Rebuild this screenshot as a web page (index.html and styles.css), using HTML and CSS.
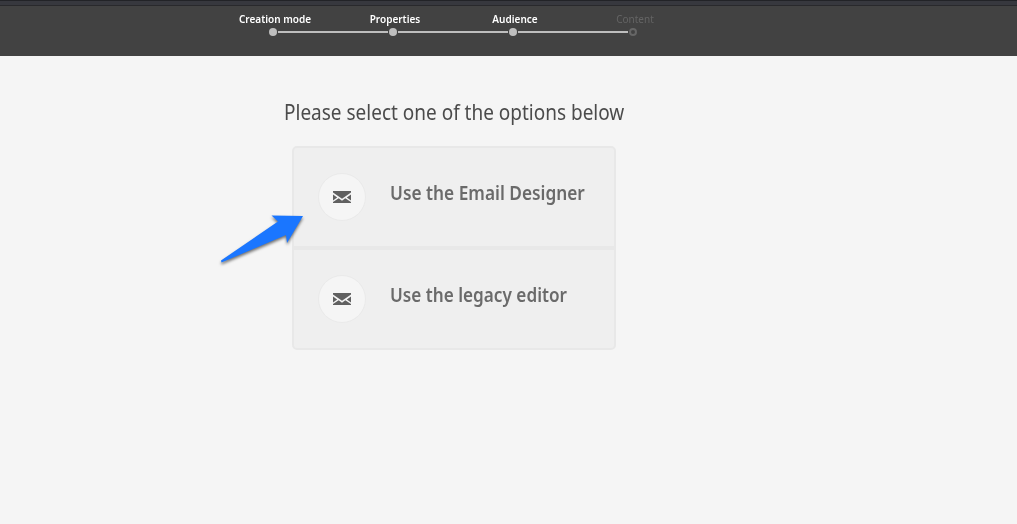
FILE: index.html
```html
<!DOCTYPE html>
<html lang="en">
<head>
<meta charset="utf-8">
<title>Create email</title>
<link rel="stylesheet" href="styles.css">
</head>
<body>
<header class="topbar">
  <ol class="steps">
    <li class="step"><span class="step-label">Creation mode</span><span class="track"><i class="dot"></i><i class="line"></i></span></li>
    <li class="step"><span class="step-label">Properties</span><span class="track"><i class="dot"></i><i class="line"></i></span></li>
    <li class="step"><span class="step-label">Audience</span><span class="track"><i class="dot"></i><i class="line"></i></span></li>
    <li class="step pending"><span class="step-label">Content</span><span class="track"><i class="dot"></i></span></li>
  </ol>
</header>
<main class="chooser">
  <h1 class="title"><span>Please select one of the options below</span></h1>
  <div class="options">
    <a class="option">
      <span class="badge"><svg width="18" height="12" viewBox="0 0 18 12"><path d="M0 0h18v1.600L9 7.800 0 1.600zM0 3.600l4.200 2.900L0 9.400zM18 3.600l-4.200 2.900L18 9.400zM0 12v-1L5.700 7.300 9 9.700l3.300-2.400L18 11v1z"/></svg></span>
      <span class="option-label designer">Use the Email Designer</span>
    </a>
    <a class="option">
      <span class="badge"><svg width="18" height="12" viewBox="0 0 18 12"><path d="M0 0h18v1.600L9 7.800 0 1.600zM0 3.600l4.200 2.900L0 9.400zM18 3.600l-4.200 2.900L18 9.400zM0 12v-1L5.700 7.300 9 9.700l3.300-2.400L18 11v1z"/></svg></span>
      <span class="option-label">Use the legacy editor</span>
    </a>
    <svg class="pointer" width="100" height="70" viewBox="0 0 100 70"><path d="M11 50.500L68 11.500L61.500 5.500L93 6L77 33L76 25L11.500 52.500z"/></svg>
  </div>
</main>
</body>
</html>
```
FILE: styles.css
```css
* { box-sizing: border-box; }
body {
  margin: 0;
  min-height: 524px;
  background: #f5f5f5;
  font-family: "Noto Sans", sans-serif;
  overflow: hidden;
}
.topbar {
  height: 56px;
  background: linear-gradient(#222327 0 1px, #37383e 1px 5px, #29292c 5px 6px, #424242 6px);
}
.steps {
  display: flex;
  list-style: none;
  margin: 0;
  padding: 11px 0 0 215px;
}
.step { width: 120px; }
.step-label {
  display: block;
  height: 16px;
  line-height: 16px;
  text-align: center;
  white-space: nowrap;
  font-size: 11.5px;
  font-weight: 600;
  color: #fff;
  transform: scaleX(.87);
}
.pending .step-label { color: #646464; font-weight: 400; }
.track {
  display: flex;
  align-items: center;
  gap: 1px;
  width: 120px;
  height: 10px;
  margin-left: 54px;
}
.dot {
  flex: none;
  width: 8px;
  height: 8px;
  border-radius: 50%;
  background: #bebebe;
}
.line { width: 110px; height: 2px; background: #bebebe; }
.pending .dot { border: 2px solid #666; background: none; }
.chooser {
  width: 324px;
  margin-left: 292px;
  padding-top: 41px;
}
.title {
  margin: 0 0 19px -8px;
  height: 30px;
  line-height: 30px;
  font-size: 21px;
  font-weight: 400;
  color: #4b4b4b;
  white-space: nowrap;
}
.title span { display: inline-block; transform: scaleX(.904); transform-origin: left; }
.options { position: relative; }
.option {
  display: flex;
  align-items: center;
  gap: 24px;
  height: 102px;
  padding-left: 24px;
  border: 2px solid #e8e8e8;
  background: #efefef;
}
.option:nth-child(1) { border-radius: 5px 5px 0 0; }
.option:nth-child(2) { border-radius: 0 0 5px 5px; }
.badge {
  display: grid;
  place-items: center;
  width: 48px;
  height: 48px;
  border: 1px solid #eaeaea;
  border-radius: 50%;
  background: #f5f5f5;
}
.badge svg { fill: #606060; }
.option-label {
  margin-bottom: 8px;
  line-height: 28px;
  font-size: 19.5px;
  font-weight: 600;
  color: #6a6a6a;
  white-space: nowrap;
  transform: scaleX(.88);
  transform-origin: left;
}
.designer { transform: scaleX(.886); }
.pointer {
  position: absolute;
  left: -82px;
  top: 64px;
  fill: #1a76ff;
  filter: drop-shadow(0 2px 1.5px rgba(0, 0, 0, .55));
}
```
